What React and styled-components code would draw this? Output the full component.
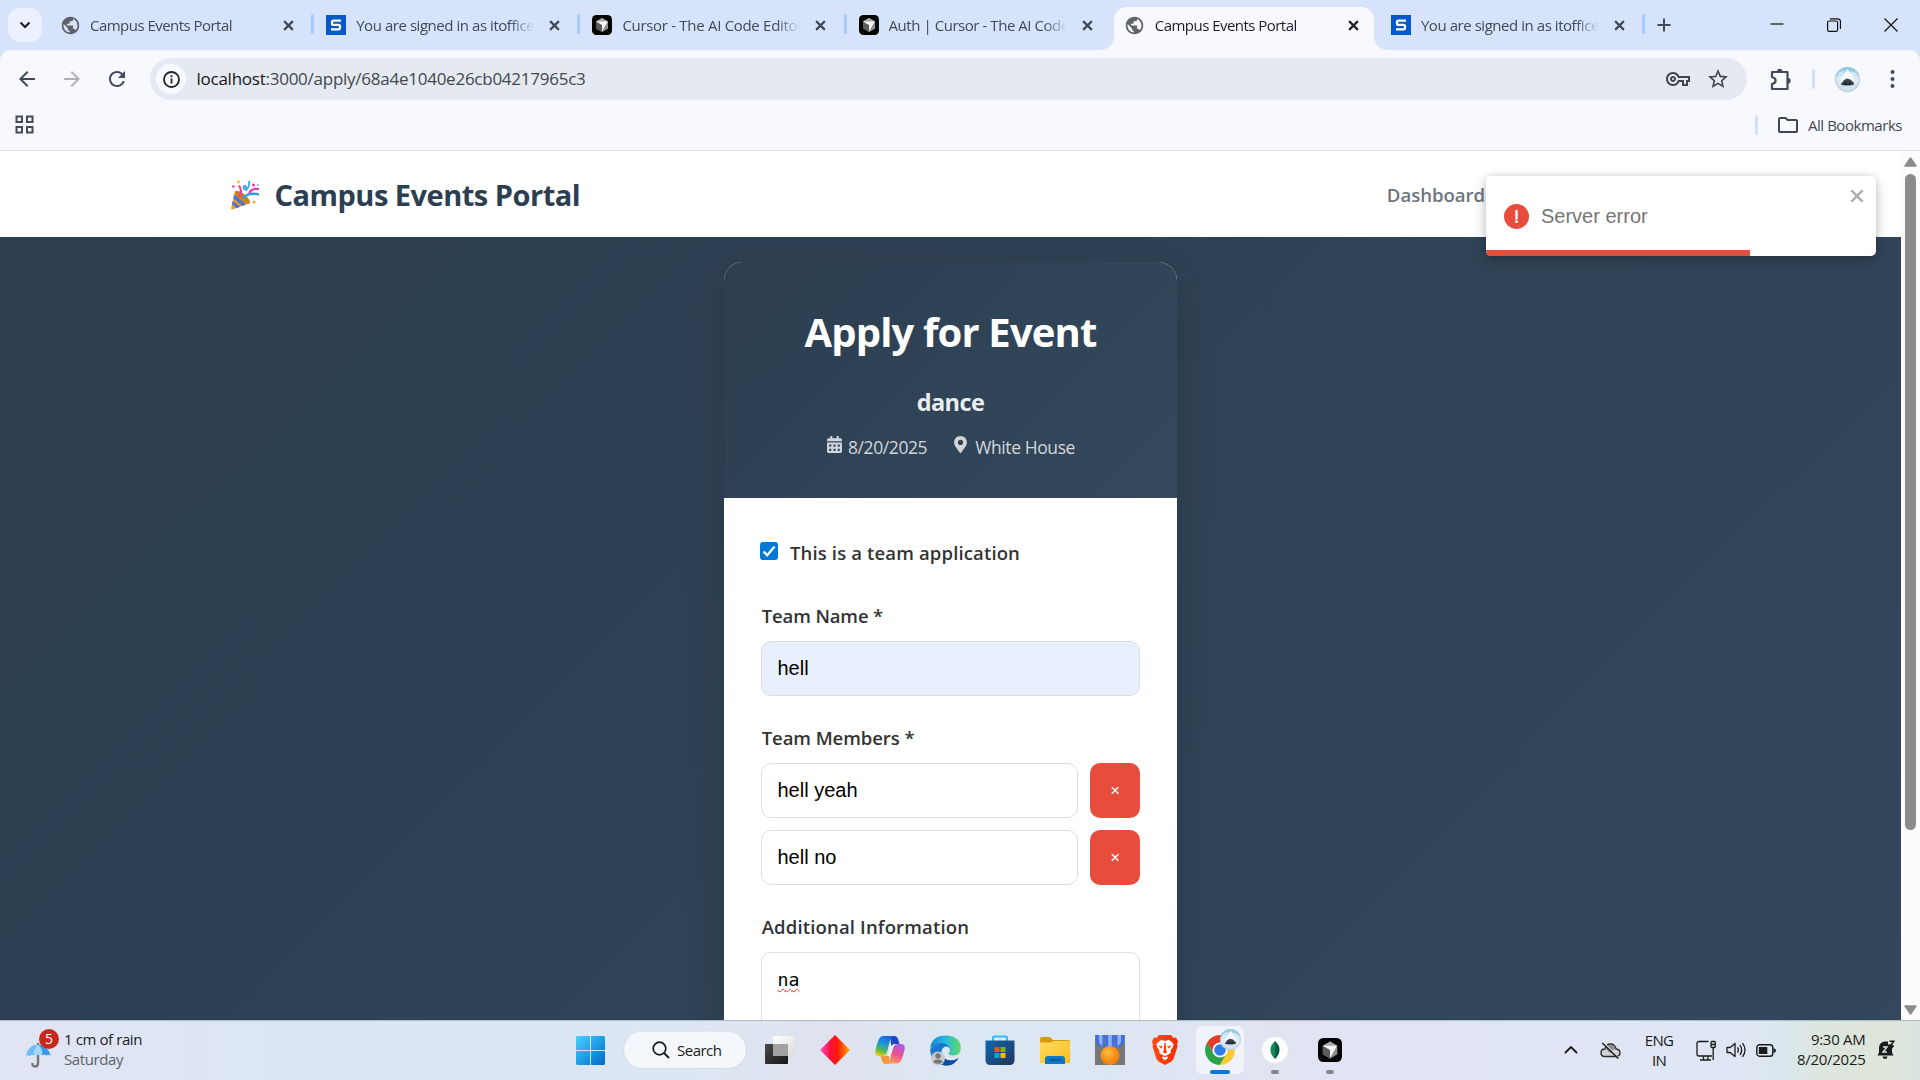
import React from 'react';
import styled, { createGlobalStyle, css } from 'styled-components';
import { FaCalendarAlt, FaMapMarkerAlt } from 'react-icons/fa';
import {
  MdPublic, MdArrowBack, MdArrowForward, MdRefresh, MdOutlineVpnKey, MdStarBorder, MdOutlineFolder,
} from 'react-icons/md';

const GlobalStyle = createGlobalStyle`
  * { box-sizing: border-box; }
  body {
    margin: 0;
    overflow: hidden;
    font-family: "Open Sans", "Noto Sans", sans-serif;
  }
  svg { display: block; flex: none; }
`;

const Desktop = styled.div`
  position: relative;
  display: flex;
  flex-direction: column;
  width: 1920px;
  height: 1080px;
  overflow: hidden;
  background: #d7e3fa;
`;

/* ---------- Browser tabs ---------- */

const TabStrip = styled.div`
  display: flex;
  height: 50px;
  padding-left: 8px;
  background: #d7e3fa;
`;

const TabSearch = styled.div`
  display: flex;
  align-items: center;
  justify-content: center;
  width: 34px;
  height: 34px;
  margin: 8px 4px 0 0;
  border-radius: 12px;
  background: #ebf1fe;
`;

const Tab = styled.div`
  position: relative;
  display: flex;
  align-items: center;
  width: 266.2px;
  height: 50px;
  padding: 0 14px;
  color: ${(p) => (p.$active ? '#1d1f24' : '#41495a')};

  ${(p) => p.$active && css`
    &::before {
      content: '';
      position: absolute;
      inset: 7px 3px 0 3px;
      border-radius: 13px 13px 0 0;
      background: #f8f9ff;
    }
  `}
  > * { z-index: 1; }
`;

const Flare = styled.span`
  position: absolute;
  bottom: 0;
  ${(p) => (p.$side === 'left' ? 'left: -10px;' : 'right: -10px;')}
  width: 13px;
  height: 13px;
  background: radial-gradient(circle at ${(p) => (p.$side === 'left' ? '0 0' : '100% 0')}, #d7e3fa 12.5px, #f8f9ff 13px);
`;

const TabTitle = styled.span`
  flex: none;
  width: 178px;
  margin-left: 10px;
  overflow: hidden;
  font-size: 15px;
  letter-spacing: ${(p) => p.$spacing || '-0.5px'};
  line-height: 24px;
  white-space: nowrap;
  mask-image: linear-gradient(90deg, #000 87%, transparent);
`;

const TabClose = styled.span`
  display: flex;
  margin-left: 15px;
`;

const TabDivider = styled.span`
  position: absolute;
  right: -2px;
  top: 14px;
  width: 3px;
  height: 20px;
  border-radius: 2px;
  background: #a6caff;
`;

const NewTab = styled.div`
  display: flex;
  align-items: center;
  margin-left: 14px;
`;

const WindowControls = styled.div`
  display: flex;
  align-items: center;
  margin-left: auto;
  padding-right: 22px;
  gap: 43px;
`;

/* ---------- Browser toolbar ---------- */

const Toolbar = styled.div`
  display: flex;
  align-items: center;
  height: 58px;
  padding: 0 25px 0 15px;
  border-radius: 11px 11px 0 0;
  background: #f8f9ff;
`;

const NavIcons = styled.div`
  display: flex;
  align-items: center;
  gap: 21px;
  width: 135px;
  color: #41495a;
`;

const AddressBar = styled.div`
  display: flex;
  align-items: center;
  width: 1597px;
  height: 42px;
  padding: 0 17px 0 6px;
  border-radius: 21px;
  background: #e5e9f2;
  color: #41454c;
`;

const SiteInfo = styled.div`
  display: flex;
  align-items: center;
  justify-content: center;
  width: 30px;
  height: 30px;
  border-radius: 50%;
  background: #f8f9ff;
`;

const Url = styled.span`
  flex: 1;
  margin-left: 10.5px;
  padding-bottom: 1px;
  font-size: 17px;
  letter-spacing: -0.25px;
  color: #43474e;

  b { font-weight: 400; color: #16181c; }
`;

const AddressIcons = styled.div`
  display: flex;
  gap: 16px;
`;

const ToolbarRight = styled.div`
  display: flex;
  flex: 1;
  align-items: center;
  justify-content: flex-end;
`;

const ToolbarDivider = styled.span`
  width: 3px;
  height: 20px;
  border-radius: 2px;
  background: #cfe1ff;
  margin: ${(p) => p.$margin};
`;

const ProfileSlot = styled.span`
  margin-right: 30px;
`;

const BookmarksBar = styled.div`
  display: flex;
  align-items: center;
  height: 43px;
  padding: 0 18px 9px 15px;
  border-bottom: 1px solid #dde1ec;
  background: #f8f9ff;
`;

const BookmarksLink = styled.div`
  display: flex;
  align-items: center;
  margin-left: auto;
  color: #43474e;
  font-size: 15px;
  letter-spacing: -0.46px;

  span { margin-left: 8px; }
`;

/* ---------- Page ---------- */

const Viewport = styled.div`
  display: flex;
  height: 869px;
`;

const Page = styled.main`
  display: flex;
  flex-direction: column;
  width: 1901px;
  overflow: hidden;
`;

const SiteHeader = styled.header`
  display: flex;
  flex: none;
  align-items: center;
  justify-content: space-between;
  height: 86px;
  padding: 0 416px 0 231px;
  background: #fff;
`;

const Brand = styled.div`
  display: flex;
  align-items: center;
  gap: 14.500px;
  padding-top: 2px;
  color: #2c3e50;
  font-size: 29px;
  font-weight: 700;
  line-height: 40px;
  letter-spacing: -0.5px;
`;

const NavLink = styled.a`
  color: #6c757d;
  font-size: 18.6px;
  font-weight: 600;
  letter-spacing: -0.05px;
`;

const PageBody = styled.section`
  display: flex;
  flex: 1;
  justify-content: center;
  align-items: flex-start;
  padding-top: 25px;
  background: linear-gradient(135deg, #2c3e50 0%, #34495e 100%);
`;

const Card = styled.div`
  width: 453px;
  height: 1100px;
  flex: none;
  border-radius: 18.75px;
  overflow: hidden;
  background: #fff;
  box-shadow: 0 12px 38px rgba(0, 0, 0, 0.17);
`;

const CardHeader = styled.div`
  display: flex;
  flex-direction: column;
  align-items: center;
  height: 236px;
  padding-top: 40px;
  background: linear-gradient(135deg, #2c3e50 0%, #34495e 100%);
  color: #fff;
`;

const Heading = styled.h1`
  margin: 0;
  font-size: 40px;
  font-weight: 700;
  line-height: 60px;
  letter-spacing: -0.85px;
`;

const EventName = styled.h2`
  margin: 25px 0 18px;
  font-size: 23.5px;
  font-weight: 700;
  line-height: 30px;
  letter-spacing: -0.6px;
  color: #ebecee;
`;

const EventMeta = styled.div`
  display: flex;
  gap: 25px;
  color: #d2d6da;
  font-size: 17.5px;
  line-height: 24px;
  letter-spacing: -0.4px;
`;

const MetaItem = styled.span`
  display: flex;
  gap: ${(p) => p.$gap};

  svg { margin-top: 1px; }
`;

const Form = styled.form`
  display: flex;
  flex-direction: column;
  padding: 43px 37px 0;
`;

const CheckRow = styled.label`
  display: flex;
  align-items: center;
  height: 24px;
  margin: 0 0 39px -2px;
`;

const CheckBox = styled.span`
  display: flex;
  align-items: center;
  justify-content: center;
  width: 18px;
  height: 18px;
  margin: 0 12.500px 4px 0.500px;
  border-radius: 3px;
  background: #0078d7;
`;

const Label = styled.span`
  color: #333;
  font-size: 18.5px;
  font-weight: 600;
  line-height: 24px;
  letter-spacing: ${(p) => p.$spacing || '0.1px'};
`;

const Field = styled.div`
  display: flex;
  flex-direction: column;
  margin-bottom: 30px;

  > ${Label} { margin: 0 0 13px 0.700px; }
`;

const TextInput = styled.input`
  flex: 1;
  min-width: 0;
  min-height: 55px;
  padding: 0 15.500px;
  border: 1px solid #dcdee0;
  border-radius: 10px;
  outline: none;
  background: ${(p) => (p.$autofilled ? '#e8effd' : '#fff')};
  color: #000;
  font: 20px "Liberation Sans", Arial, sans-serif;
`;

const MemberList = styled.div`
  display: flex;
  flex-direction: column;
  gap: 12px;
`;

const MemberRow = styled.div`
  display: flex;
  gap: 12px;
  height: 55px;
`;

const RemoveButton = styled.button`
  width: 50px;
  padding: 0;
  border: 0;
  border-radius: 10px;
  background: #e74c3c;
  color: #fff;
  font: 16.7px "Liberation Sans", Arial, sans-serif;
`;

const NotesBox = styled.div`
  height: 150px;
  padding: 15px 15.500px;
  border: 1px solid #dcdee0;
  border-radius: 10px;
  color: #000;
  font: 18.3px/24px "DejaVu Sans Mono", monospace;
`;

const Misspelled = styled.span`
  text-decoration: underline wavy #f3261f 1.300px;
  text-underline-offset: 2px;
  text-decoration-skip-ink: none;
`;

/* ---------- Scrollbar ---------- */

const Scrollbar = styled.div`
  display: flex;
  flex-direction: column;
  align-items: center;
  width: 19px;
  padding: 6px 0 5px;
  background: #fcfcfc;
`;

const ScrollThumb = styled.div`
  width: 11px;
  height: 656px;
  margin: 7px 0 auto;
  border-radius: 6px;
  background: #8b8b8b;
`;

/* ---------- Toast ---------- */

const ToastShadow = styled.div`
  position: absolute;
  top: 176px;
  left: 1486px;
  width: 390px;
  height: 80px;
  border-radius: 5px;
  box-shadow: 0 5px 15px rgba(0, 0, 0, 0.2), 0 0 6px rgba(0, 0, 0, 0.12);
`;

const Toast = styled.div`
  position: relative;
  display: flex;
  align-items: center;
  height: 80px;
  padding-left: 18px;
  border-radius: 5px;
  overflow: hidden;
  background: #fff;
  color: #757575;
  font: 20px "Liberation Sans", Arial, sans-serif;
`;

const ToastText = styled.span`
  margin-left: 12px;
`;

const ToastClose = styled.span`
  align-self: flex-start;
  margin: 13px 12px 0 auto;
`;

const ToastProgress = styled.span`
  position: absolute;
  left: 0;
  bottom: 0;
  width: 264px;
  height: 6px;
  background: #e74c3c;
`;

/* ---------- Taskbar ---------- */

const Taskbar = styled.footer`
  display: grid;
  grid-template-columns: 576px 1fr 356px;
  align-items: center;
  height: 60px;
  padding-bottom: 1px;
  border-top: 1px solid #b3b8c3;
  background: linear-gradient(90deg, #e0e5f4 0, #dde5f3 10%, #dae6f2 22%, #dce6f2 36%, #dfe2ef 43%, #dbe7f2 50%, #dce6f2 58%, #e1e3f1 66%, #dfe5f4 82%, #dfe6f3 91%, #d9e7ec 93%, #dde6dd 95%, #dee6da 98%, #dbe3e0 100%);
  color: #1b1b1b;
  font-size: 15px;
  line-height: 20px;
`;

const Weather = styled.div`
  display: flex;
  align-items: center;
  padding-left: 26px;
  gap: 5px;
`;

const WeatherText = styled.div`
  display: flex;
  flex-direction: column;
  padding-bottom: 3px;
  letter-spacing: -0.4px;

  span:last-child { color: #5d6068; }
`;

const WeatherIcon = styled.div`
  position: relative;
  width: 33px;
  height: 42px;
  padding-top: 12px;
`;

const Badge = styled.span`
  position: absolute;
  top: 0;
  right: 0;
  width: 20px;
  height: 20px;
  border-radius: 50%;
  background: #c42b1c;
  color: #fff;
  font-size: 14px;
  line-height: 20px;
  text-align: center;
`;

const AppRow = styled.div`
  display: flex;
  align-items: center;
`;

const SearchPill = styled.div`
  display: flex;
  align-items: center;
  width: 124px;
  height: 38px;
  margin: 0 9px 0 18px;
  padding-left: 28px;
  gap: 7px;
  border: 1px solid #d3dbe6;
  border-top-color: #e3e9f2;
  border-radius: 19px;
  background: #f4f7fb;
  letter-spacing: -0.5px;
`;

const AppSlot = styled.div`
  position: relative;
  display: flex;
  align-items: center;
  justify-content: center;
  width: 48px;
  height: 48px;
  margin-right: 7px;
  border-radius: 6px;
  ${(p) => p.$active && css`
    background: #f0f3fa;
    box-shadow: 0 0 0 1px #e0e4ee;
  `}
`;

const Indicator = styled.span`
  position: absolute;
  left: 50%;
  bottom: 0;
  width: ${(p) => (p.$active ? 20 : 8)}px;
  height: 4px;
  border-radius: 2px;
  transform: translateX(-50%);
  background: ${(p) => (p.$active ? '#0078d4' : '#83858c')};
`;

const ProfileBadge = styled.span`
  position: absolute;
  top: 3px;
  right: 3px;
`;

const Tray = styled.div`
  display: flex;
  align-items: center;
`;

const CloudSlot = styled.span`
  margin-left: 22px;
`;

const Language = styled.div`
  display: flex;
  flex-direction: column;
  align-items: center;
  width: 30px;
  margin: 0 22px 0 23px;
  letter-spacing: -0.7px;
`;

const StatusIcons = styled.div`
  display: flex;
  align-items: center;
  gap: 10px;
`;

const Clock = styled.div`
  display: flex;
  flex-direction: column;
  align-items: flex-end;
  width: 89.500px;
  padding-bottom: 3px;
  margin-right: 11px;
  letter-spacing: -0.28px;
`;

/* ---------- Icons ---------- */

const Cross = ({ size = 10, color = '#41495a', width = 2 }) => (
  <svg width={size} height={size} viewBox="0 0 10 10">
    <path d="M1 1l8 8M9 1l-8 8" stroke={color} strokeWidth={width} fill="none" />
  </svg>
);

const SIcon = () => (
  <svg width="20" height="20" viewBox="0 0 20 20">
    <rect width="20" height="20" fill="#0558c8" />
    <path d="M15 5.600H7.600Q6 5.600 6 7v1.400Q6 9.800 7.600 9.800h4.800q1.600 0 1.600 1.400v1.600q0 1.500-1.600 1.500H5" fill="none" stroke="#fff" strokeWidth="2.300" />
  </svg>
);

const CursorIcon = ({ size = 20 }) => (
  <svg width={size} height={size} viewBox="0 0 20 20">
    <rect width="20" height="20" rx="4.500" fill="#050505" />
    <path d="M10 3l6 3.500v7L10 17l-6-3.500v-7z" fill="#777" />
    <path d="M10 3l6 3.500-6 3.500-6-3.500z" fill="#a9a9a9" />
    <path d="M4 6.500l6 3.500v7l-6-3.500z" fill="#5b5b5b" />
    <path d="M4 6.500h12L10 17v-7z" fill="#f5f5f5" />
    <path d="M16 6.500L10 17l6-3.500z" fill="#8f8f8f" />
  </svg>
);

const GlobeIcon = () => <MdPublic size={21} color="#5f6368" />;

const Avatar = ({ size }) => (
  <svg width={size} height={size} viewBox="0 0 26 26">
    <defs><clipPath id={`avatar${size}`}><circle cx="13" cy="13" r="13" /></clipPath></defs>
    <g clipPath={`url(#avatar${size})`}>
      <rect width="26" height="26" fill="#dceaf4" />
      <path d="M0 0h26v9l-6-1-7-5-6 6-7 1z" fill="#8fcbe6" />
      <path d="M4 6l6-3-1 5-7 3zM17 4l6 3-1 2-5-2z" fill="#cfe8f3" />
      <path d="M9 8l4-6 5 7 3 6H5z" fill="#f4f8fb" />
      <path d="M6 18l3-4 3-2 4 1 4 4-1 2H7z" fill="#3d444d" />
      <path d="M9 18l2-3 2 3 3-3 1 4H9z" fill="#20252c" />
      <path d="M0 18l6 1 8 1 12-3v9H0z" fill="#d3e1ef" />
    </g>
    <circle cx="13" cy="13" r="12.400" fill="none" stroke="#a8c4d4" strokeWidth="0.800" />
  </svg>
);

const PopperIcon = () => (
  <svg width="29" height="30" viewBox="0 0 29 30">
    <path d="M4 11l15 12L1.500 29.500Q0 29.800 .2 28z" fill="#e5a01f" />
    <path d="M3.300 14.500L15 24.600l-3.600 1.300L2.300 18zM1.700 21l7.500 5.700-3.300 1.200L.9 24z" fill="#4a6ee0" />
    <ellipse cx="11.500" cy="17.200" rx="3.400" ry="9.300" transform="rotate(-50 11.500 17.200)" fill="#c98312" />
    <path d="M8 17q4-5 0-11.500" fill="none" stroke="#f03aa5" strokeWidth="2.200" />
    <path d="M12 18q5-6 16-3.500" fill="none" stroke="#2f9fe8" strokeWidth="2.400" />
    <path d="M18 13q3-5 10-4" fill="none" stroke="#f03aa5" strokeWidth="2.200" />
    <path d="M18 1q1 7-3.500 8.500-3-.5-1.500-3.500 2.500-1 2.500 5" fill="none" stroke="#39a7ee" strokeWidth="1.800" />
    <circle cx="7.500" cy="2" r="1.400" fill="#f5b83c" />
    <circle cx="2.500" cy="6.500" r="1.300" fill="#f03aa5" />
    <circle cx="22.500" cy="5" r="1.500" fill="#f03aa5" />
    <circle cx="23" cy="22" r="1.500" fill="#f5a93c" />
    <circle cx="27" cy="5" r="1" fill="#5bb8f0" />
  </svg>
);

const PuzzleIcon = () => (
  <svg width="22" height="26" viewBox="0 0 22 26">
    <path d="M2 6h15.500v17H2v-5q3.600-.8 3.600-3.500T2 11z" fill="none" stroke="#41495a" strokeWidth="2.200" strokeLinejoin="round" />
    <path d="M7 5.500a2.700 2.700 0 0 1 5.400 0zM18 12a2.700 2.700 0 0 1 0 5.400z" fill="#41495a" />
  </svg>
);

const MenuDots = () => (
  <svg width="5" height="20" viewBox="0 0 5 20" fill="#41495a">
    <circle cx="2.500" cy="3" r="2" />
    <circle cx="2.500" cy="10" r="2" />
    <circle cx="2.500" cy="17" r="2" />
  </svg>
);

const AppsIcon = () => (
  <svg width="19" height="19" viewBox="0 0 19 19" fill="none" stroke="#474b52" strokeWidth="2">
    <path d="M1.500 1.500h5.500v5.500h-5.500zM12 1.500h5.500v5.500H12zM1.500 12h5.500v5.500h-5.500zM12 12h5.500v5.500H12z" />
  </svg>
);

const UmbrellaIcon = () => (
  <svg width="25" height="27" viewBox="0 0 25 27">
    <path d="M12 2v2M12 13v9q0 3.500-3 3.500T6.500 22" fill="none" stroke="#7d7471" strokeWidth="2.400" />
    <path d="M0 15Q2 3.500 12 3.500T24.500 15q-2-2-4-.5-2-2-4.200-.2-2.200-2-4.400 0-2-1.800-4 .2-2-1.500-4 .5-2-1.500-3.900 0z" fill="#6bbcf8" />
    <path d="M12 3.500Q7.500 8 7.900 14.500q2-2 4-.2 2.200-2 4.400 0Q16.500 8 12 3.500z" fill="#a3d8fd" />
    <path d="M12 3.500Q18 8 16.300 14.300q2.200-1.800 4.200.2 2-1.500 4 .5Q22 3.500 12 3.500z" fill="#3f97e8" />
  </svg>
);

const WindowsIcon = () => (
  <svg width="29" height="29" viewBox="0 0 29 29">
    <defs><linearGradient id="win" gradientUnits="userSpaceOnUse" x1="0" y1="0" x2="29" y2="29"><stop offset="0" stopColor="#4fd0ff" /><stop offset=".5" stopColor="#1f9fe5" /><stop offset="1" stopColor="#0067c8" /></linearGradient></defs>
    <path d="M1 0h13v14H0V1zM15 0h13l1 1v13H15zM0 15h14v14H1l-1-1zM15 15h14v13l-1 1H15z" fill="url(#win)" />
  </svg>
);

const TaskViewIcon = () => (
  <svg width="30" height="28" viewBox="0 0 30 28">
    <defs>
      <linearGradient id="tv" x1="0" y1="0" x2="1" y2="1"><stop offset="0" stopColor="#fff" /><stop offset="1" stopColor="#dcdcdc" /></linearGradient>
      <linearGradient id="tvd" x1="0" y1="0" x2="1" y2="1"><stop offset="0" stopColor="#4a4a4a" /><stop offset="1" stopColor="#161616" /></linearGradient>
    </defs>
    <rect y="8" width="23" height="20" rx="1" fill="url(#tvd)" />
    <rect x="8" width="22" height="20" rx="1" fill="url(#tv)" />
    <rect x="8" y="8" width="15" height="12" fill="#a2a2a2" />
  </svg>
);

const DiamondIcon = () => (
  <svg width="30" height="30" viewBox="0 0 30 30">
    <defs><linearGradient id="dia"><stop offset="0" stopColor="#ff4fd0" /><stop offset=".35" stopColor="#fb1038" /><stop offset=".6" stopColor="#ff1c08" /><stop offset="1" stopColor="#ffb000" /></linearGradient></defs>
    <path d="M15 0l15 15-15 15L0 15z" fill="url(#dia)" />
  </svg>
);

const CopilotIcon = () => (
  <svg width="30" height="28" viewBox="0 0 30 28">
    <defs>
      <linearGradient id="cp1" x1=".6" y1="0" x2=".3" y2="1"><stop offset="0" stopColor="#1b62e0" /><stop offset=".35" stopColor="#1d8fe0" /><stop offset=".7" stopColor="#4cb95a" /><stop offset="1" stopColor="#e9c90c" /></linearGradient>
      <linearGradient id="cp2" x1=".7" y1="0" x2=".3" y2="1"><stop offset="0" stopColor="#a85be8" /><stop offset=".5" stopColor="#ec4f8c" /><stop offset="1" stopColor="#fda05a" /></linearGradient>
    </defs>
    <path d="M15 0h4q3 0 4 3l1.500 5h-4q-3 0-4 3z" fill="#1a45c8" />
    <path d="M15 28h-4q-3 0-4-3l-1.500-5h4q3 0 4-3z" fill="#f59a3c" />
    <path d="M8.500 0H18q-2 1-3 4.500L12 16q-1.200 4-5 4H4Q0 20 .2 15.500 1.500 8 4 3 5.500 0 8.500 0z" fill="url(#cp1)" />
    <path d="M21.500 27.500H12q2-1 3-4.500l3-11q1.200-4 5-4h3q4 0 3.800 4.500Q28.500 20 26 24.500q-1.500 3-4.500 3z" fill="url(#cp2)" />
    <path d="M16.600 9.500q1.500-1.600 4-1.500-2 1-2.600 4l-2.300 7q-1.300 1-3.700 1 1.300-1.500 2-4z" fill="#f3f3fa" />
  </svg>
);

const EdgeIcon = () => (
  <svg width="31" height="31" viewBox="0 0 31 31">
    <defs>
      <linearGradient id="e1"><stop offset="0" stopColor="#1787d8" /><stop offset=".5" stopColor="#27b9dc" /><stop offset="1" stopColor="#62dc62" /></linearGradient>
      <linearGradient id="e2" x1="0" y1="0" x2="1" y2="1"><stop offset="0" stopColor="#1a86d8" /><stop offset="1" stopColor="#0c4f9e" /></linearGradient>
    </defs>
    <path d="M.2 13Q2 .5 15.500.5 30.500 1 30.800 13q0 7.500-7.500 7.500-4.800 0-4.500-2.500 1.700-1.800 1-4-1.500-3.500-6.300-3.500Q6 8.500.2 13z" fill="url(#e1)" />
    <path d="M.2 14Q4 7.500 12 8q7 .8 7.800 6-.5-3-4.300-2.500-4.500 1.500-4 6.500.8 6 8 7.500 5 .5 8.700-2.300Q24 30.500 15.500 30.500.500 29.500.2 14z" fill="url(#e2)" />
    <path d="M11.500 18q1 7 9 7.600 4.500 0 8-2.400-4.500 8-13.500 7.300-6-2-5.500-8.500z" fill="#124f9f" />
    <circle cx="8" cy="23.500" r="7" fill="#c9c9c9" />
    <circle cx="8" cy="21" r="2.700" fill="#777" /><path d="M3.500 27.500q0-3 4.500-3t4.500 3q-4.500 2.500-9 0z" fill="#777" />
  </svg>
);

const StoreIcon = () => (
  <svg width="30" height="30" viewBox="0 0 30 30">
    <defs><linearGradient id="st" x1="0" y1="0" x2="1" y2="1"><stop offset="0" stopColor="#0e68ad" /><stop offset="1" stopColor="#23345e" /></linearGradient></defs>
    <path d="M8 7V3q0-1.500 1.500-1.500h11Q22 1.500 22 3v4" fill="none" stroke="#30bdf0" strokeWidth="2" />
    <path d="M.5 5.500h29V25q0 5-5 5h-19q-5 0-5-5z" fill="url(#st)" />
    <path d="M9.500 12h5v5h-5z" fill="#f25022" /><path d="M15.500 12h5v5h-5z" fill="#7fba00" />
    <path d="M9.500 18h5v5h-5z" fill="#00a4ef" /><path d="M15.500 18h5v5h-5z" fill="#ffb900" />
  </svg>
);

const ExplorerIcon = () => (
  <svg width="30" height="27" viewBox="0 0 30 27">
    <defs><linearGradient id="fo" x1="0" y1="0" x2="1" y2="1"><stop offset="0" stopColor="#ffdc62" /><stop offset="1" stopColor="#f8bd1e" /></linearGradient></defs>
    <path d="M0 2Q0 0 2 0h7q1.500 0 2.500 1.500L13 3h15q2 0 2 2v3H0z" fill="#d99b0c" />
    <path d="M0 5.500h11l2.500-1.500H28q2 0 2 2v20H0z" fill="url(#fo)" />
    <path d="M5 27v-5q0-3 3-3h14q3 0 3 3v5z" fill="#0b78c8" />
    <path d="M9 23h12" stroke="#0a4f90" strokeWidth="1.400" />
  </svg>
);

const MedalIcon = () => (
  <svg width="30" height="30" viewBox="0 0 30 30">
    <defs><radialGradient id="md" cx=".4" cy=".35"><stop offset="0" stopColor="#ffc13a" /><stop offset="1" stopColor="#f58410" /></radialGradient></defs>
    <rect width="30" height="30" fill="#777" />
    <path d="M1 0h9v12H8Q2 11 1 6z" fill="#3f6df0" />
    <path d="M29 0h-9v12h2q6-1 7-6z" fill="#3f6df0" />
    <path d="M11 0h8v12h-8z" fill="#3f6df0" />
    <path d="M4 0h3.500v11Q4 9 4 6zM13.200 0h3.600v12h-3.600zM22.500 0H26v6q0 3-3.500 5z" fill="#8db4fb" />
    <circle cx="15" cy="20.500" r="9.500" fill="url(#md)" />
  </svg>
);

const BraveIcon = () => (
  <svg width="26" height="30" viewBox="0 0 26 30">
    <defs><linearGradient id="br"><stop offset="0" stopColor="#ff4a10" /><stop offset="1" stopColor="#ff2a00" /></linearGradient></defs>
    <path d="M7 0h12l2.500 3 2.500-.5 2 4-1 3 .5 2-4 12.500-2 2.500L13 30l-6.500-3.500-2-2.500L.500 11.500l.5-2-1-3 2-4L4.500 3z" fill="url(#br)" />
    <path d="M13 6l4-1.300 4.500 4-.5 3.300-2.500 3.500.5 2-4 3 1 2.500-3 2.500-3-2.500 1-2.500-4-3 .5-2L5 12l-.5-3.300L9 4.700z" fill="#fff" />
    <path d="M6.500 10.500l4.500 1-2 2zM19.500 10.500l-4.500 1 2 2zM12.300 8h1.400l.5 7 .8 2.500-2 1-2-1 .8-2.500z" fill="#ff3c08" />
    <path d="M10 20.200l3 1.500 3-1.500" fill="none" stroke="#ff3c08" strokeWidth="1.200" />
  </svg>
);

const chromeBlade = 'M24 13H43.050A22 22 0 0 0 4.950 13L14.470 29.500z';
const ChromeIcon = () => (
  <svg width="30" height="30" viewBox="2 2 44 44">
    <path d={chromeBlade} fill="#e33b2e" />
    <path d={chromeBlade} fill="#2ba24c" transform="rotate(-120 24 24)" />
    <path d={chromeBlade} fill="#fcc934" transform="rotate(120 24 24)" />
    <circle cx="24" cy="24" r="11" fill="#fff" />
    <circle cx="24" cy="24" r="8.500" fill="#2f7ae9" />
  </svg>
);

const MongoIcon = () => (
  <svg width="28" height="28" viewBox="0 0 28 28">
    <circle cx="14" cy="14" r="13.500" fill="#fdfdfd" stroke="#dfe3ea" strokeWidth=".8" />
    <path d="M14 5q5 4.500 4.500 9.500Q18 19.500 14 23z" fill="#0a5c40" />
    <path d="M14 5q-5 4.500-4.500 9.500Q10 19.500 14 23z" fill="#118c5c" />
  </svg>
);

const ScrollArrow = ({ down }) => (
  <svg width="13" height="10" viewBox="0 0 13 10">
    <path d={down ? 'M6.500 9L12 1H1z' : 'M6.500 1L12 9H1z'} fill="#8b8b8b" stroke="#8b8b8b" strokeLinejoin="round" strokeWidth="1.500" />
  </svg>
);

const CloudOffIcon = () => (
  <svg width="21" height="17" viewBox="0 0 21 17">
    <path d="M5 14.500q-4 0-4-3.800T5 7q1-5 5.500-5T16 7q4 .3 4 3.800t-4 3.700z" fill="#cfd1d6" stroke="#2b2b2b" strokeWidth="1.400" />
    <path d="M5 7.500q1-4.800 5.500-4.800T15.500 7q-2 0-3 1.500L10 11 7 8z" fill="#8c8f95" />
    <path d="M3.500 .5l15.500 16" stroke="#e3e6ee" strokeWidth="1.400" />
    <path d="M2.300 1l16 15.500" stroke="#1b1b1b" strokeWidth="1.500" />
  </svg>
);

const NetworkIcon = () => (
  <svg width="20" height="21" viewBox="0 0 20 21" fill="none" stroke="#1b1b1b" strokeWidth="1.300">
    <path d="M12.500 1.500H3q-2 0-2 2V14q0 2 2 2h13M4 20h11M7.500 16v4M12 16v4" />
    <rect x="15" y="1.500" width="4.300" height="6" rx="1" />
    <path d="M17.200 7.500V20M15 4.500h4" />
  </svg>
);

const SpeakerIcon = () => (
  <svg width="20" height="16" viewBox="0 0 20 16" fill="none" stroke="#1b1b1b" strokeWidth="1.300">
    <path d="M1 5.500h3.200L9 1.500v13L4.200 10.500H1z" strokeLinejoin="round" />
    <path d="M11.500 5.300q1.800 2.700 0 5.400M14 3.200q3.300 4.800 0 9.600M16.500 1.200q5 6.800 0 13.600" />
  </svg>
);

const BatteryIcon = () => (
  <svg width="20" height="13" viewBox="0 0 20 13">
    <rect x=".8" y=".8" width="16" height="11.400" rx="2.800" fill="none" stroke="#1b1b1b" strokeWidth="1.400" />
    <rect x="2.800" y="3" width="8.500" height="7" fill="#1b1b1b" />
    <path d="M17.500 4q2.500.5 2.500 2.500t-2.500 2.500z" fill="#1b1b1b" />
  </svg>
);

const BellIcon = () => (
  <svg width="18" height="20" viewBox="0 0 18 20">
    <path d="M2 12.500V7.500Q2.500 2 8 1.500h3v3h5v3l-1 1v4l1.500 3H.500z" fill="#1b1b1b" />
    <path d="M5.500 16.500h5q-.5 2.500-2.500 2.500t-2.500-2.500z" fill="#1b1b1b" />
    <path d="M6 7h4l-4 5h4" fill="none" stroke="#dfe6dc" strokeWidth="1.400" />
    <path d="M12.500 1.200H17l-4.500 5H17" fill="none" stroke="#1b1b1b" strokeWidth="1.400" />
  </svg>
);

/* ---------- Data ---------- */

const tabs = [
  { Icon: GlobeIcon, title: 'Campus Events Portal', spacing: '-0.53px' },
  { Icon: SIcon, title: 'You are signed in as itoffice', spacing: '-0.45px' },
  { Icon: CursorIcon, title: 'Cursor - The AI Code Editor', spacing: '-0.3px' },
  { Icon: CursorIcon, title: 'Auth | Cursor - The AI Code', spacing: '-0.45px', last: true },
  { Icon: GlobeIcon, title: 'Campus Events Portal', spacing: '-0.53px', active: true },
  { Icon: SIcon, title: 'You are signed in as itoffice', spacing: '-0.45px' },
];

const apps = [
  { Icon: TaskViewIcon },
  { Icon: DiamondIcon },
  { Icon: CopilotIcon },
  { Icon: EdgeIcon },
  { Icon: StoreIcon },
  { Icon: ExplorerIcon },
  { Icon: MedalIcon },
  { Icon: BraveIcon },
  { Icon: ChromeIcon, active: true, running: true },
  { Icon: MongoIcon, running: true },
  { Icon: () => <CursorIcon size={24} />, running: true },
];

const FaviconBox = styled.span`
  display: flex;
  align-items: center;
  justify-content: center;
  width: 20px;
  flex: none;
`;

export default function App() {
  return (
    <Desktop>
      <GlobalStyle />
      <TabStrip>
        <TabSearch>
          <svg width="12" height="8" viewBox="0 0 12 8"><path d="M1.500 1.500L6 6l4.500-4.500" fill="none" stroke="#1d1f24" strokeWidth="2.200" /></svg>
        </TabSearch>
        {tabs.map(({ Icon, title, spacing, active, last }, i) => (
          <Tab key={i} $active={active}>
            {active && <><Flare $side="left" /><Flare $side="right" /></>}
            <FaviconBox><Icon /></FaviconBox>
            <TabTitle $spacing={spacing}>{title}</TabTitle>
            <TabClose><Cross size={11} color={active ? '#1d1f24' : '#41495a'} /></TabClose>
            {!active && !last && <TabDivider />}
          </Tab>
        ))}
        <NewTab>
          <svg width="14" height="14" viewBox="0 0 14 14"><path d="M7 .5v13M.5 7h13" stroke="#41495a" strokeWidth="2" /></svg>
        </NewTab>
        <WindowControls>
          <svg width="14" height="14" viewBox="0 0 14 14"><path d="M.5 6h13" stroke="#111" strokeWidth="1.200" /></svg>
          <svg width="14" height="14" viewBox="0 0 14 14" fill="none" stroke="#111" strokeWidth="1.200"><rect x=".6" y="3" width="10" height="10.400" rx="1.500" /><path d="M3 .8h7.500q3 0 3 3V11" /></svg>
          <svg width="14" height="14" viewBox="0 0 14 14"><path d="M.5.5l13 13M13.500.5l-13 13" stroke="#111" strokeWidth="1.200" /></svg>
        </WindowControls>
      </TabStrip>

      <Toolbar>
        <NavIcons>
          <MdArrowBack size={24} />
          <MdArrowForward size={24} color="#b0b2b8" />
          <MdRefresh size={24} />
        </NavIcons>
        <AddressBar>
          <SiteInfo>
            <svg width="17" height="17" viewBox="0 0 17 17" fill="none" stroke="#1f2227" strokeWidth="1.800"><circle cx="8.500" cy="8.500" r="7.500" /><path d="M8.500 7.500v5M8.500 4.300v1.900" /></svg>
          </SiteInfo>
          <Url><b>localhost</b>:3000/apply/68a4e1040e26cb04217965c3</Url>
          <AddressIcons>
            <MdOutlineVpnKey size={24} />
            <MdStarBorder size={24} />
          </AddressIcons>
        </AddressBar>
        <ToolbarRight>
          <PuzzleIcon />
          <ToolbarDivider $margin="0 20px 0 20px" />
          <ProfileSlot><Avatar size={25} /></ProfileSlot>
          <MenuDots />
        </ToolbarRight>
      </Toolbar>

      <BookmarksBar>
        <AppsIcon />
        <BookmarksLink>
          <ToolbarDivider $margin="0 18px 0 0" />
          <MdOutlineFolder size={24} />
          <span>All Bookmarks</span>
        </BookmarksLink>
      </BookmarksBar>

      <Viewport>
        <Page>
          <SiteHeader>
            <Brand><PopperIcon />Campus Events Portal</Brand>
            <NavLink>Dashboard</NavLink>
          </SiteHeader>
          <PageBody>
            <Card>
              <CardHeader>
                <Heading>Apply for Event</Heading>
                <EventName>dance</EventName>
                <EventMeta>
                  <MetaItem $gap="5px"><FaCalendarAlt size={17} />8/20/2025</MetaItem>
                  <MetaItem $gap="6px"><FaMapMarkerAlt size={17} />White House</MetaItem>
                </EventMeta>
              </CardHeader>
              <Form>
                <CheckRow>
                  <CheckBox>
                    <svg width="14" height="14" viewBox="0 0 14 14"><path d="M1.500 7.500l3.700 3.700L12.500 2.500" fill="none" stroke="#fff" strokeWidth="2.400" /></svg>
                  </CheckBox>
                  <Label $spacing="0.14px">This is a team application</Label>
                </CheckRow>
                <Field>
                  <Label $spacing="-0.12px">Team Name *</Label>
                  <TextInput $autofilled defaultValue="hell" />
                </Field>
                <Field>
                  <Label $spacing="-0.07px">Team Members *</Label>
                  <MemberList>
                    {['hell yeah', 'hell no'].map((name) => (
                      <MemberRow key={name}>
                        <TextInput defaultValue={name} />
                        <RemoveButton type="button">×</RemoveButton>
                      </MemberRow>
                    ))}
                  </MemberList>
                </Field>
                <Field>
                  <Label $spacing="0.16px">Additional Information</Label>
                  <NotesBox><Misspelled>na</Misspelled></NotesBox>
                </Field>
              </Form>
            </Card>
          </PageBody>
        </Page>
        <Scrollbar>
          <ScrollArrow />
          <ScrollThumb />
          <ScrollArrow down />
        </Scrollbar>
      </Viewport>

      <Taskbar>
        <Weather>
          <WeatherIcon><UmbrellaIcon /><Badge>5</Badge></WeatherIcon>
          <WeatherText><span>1 cm of rain</span><span>Saturday</span></WeatherText>
        </Weather>
        <AppRow>
          <WindowsIcon />
          <SearchPill>
            <svg width="18" height="18" viewBox="0 0 18 18"><circle cx="7.500" cy="7.500" r="6.300" fill="none" stroke="#1b1b1b" strokeWidth="1.700" /><path d="M12 12l5 5" stroke="#1b1b1b" strokeWidth="1.900" /></svg>
            Search
          </SearchPill>
          {apps.map(({ Icon, active, running }, i) => (
            <AppSlot key={i} $active={active}>
              <Icon />
              {active && <ProfileBadge><Avatar size={21} /></ProfileBadge>}
              {running && <Indicator $active={active} />}
            </AppSlot>
          ))}
        </AppRow>
        <Tray>
          <svg width="14" height="8" viewBox="0 0 14 8"><path d="M1 7l6-6 6 6" fill="none" stroke="#1b1b1b" strokeWidth="1.800" /></svg>
          <CloudSlot><CloudOffIcon /></CloudSlot>
          <Language><span>ENG</span><span>IN</span></Language>
          <StatusIcons>
            <NetworkIcon />
            <SpeakerIcon />
            <BatteryIcon />
          </StatusIcons>
          <Clock><span>9:30 AM</span><span>8/20/2025</span></Clock>
          <BellIcon />
        </Tray>
      </Taskbar>

      <ToastShadow>
        <Toast>
          <svg width="25" height="25" viewBox="0 0 25 25"><circle cx="12.500" cy="12.500" r="12.500" fill="#e74c3c" /><path d="M12.500 7v7.500" stroke="#fff" strokeWidth="2.400" strokeLinecap="round" /><circle cx="12.500" cy="17.700" r="1.400" fill="#fff" /></svg>
          <ToastText>Server error</ToastText>
          <ToastClose><Cross size={14} color="#b0b0b0" width={1.900} /></ToastClose>
          <ToastProgress />
        </Toast>
      </ToastShadow>
    </Desktop>
  );
}
